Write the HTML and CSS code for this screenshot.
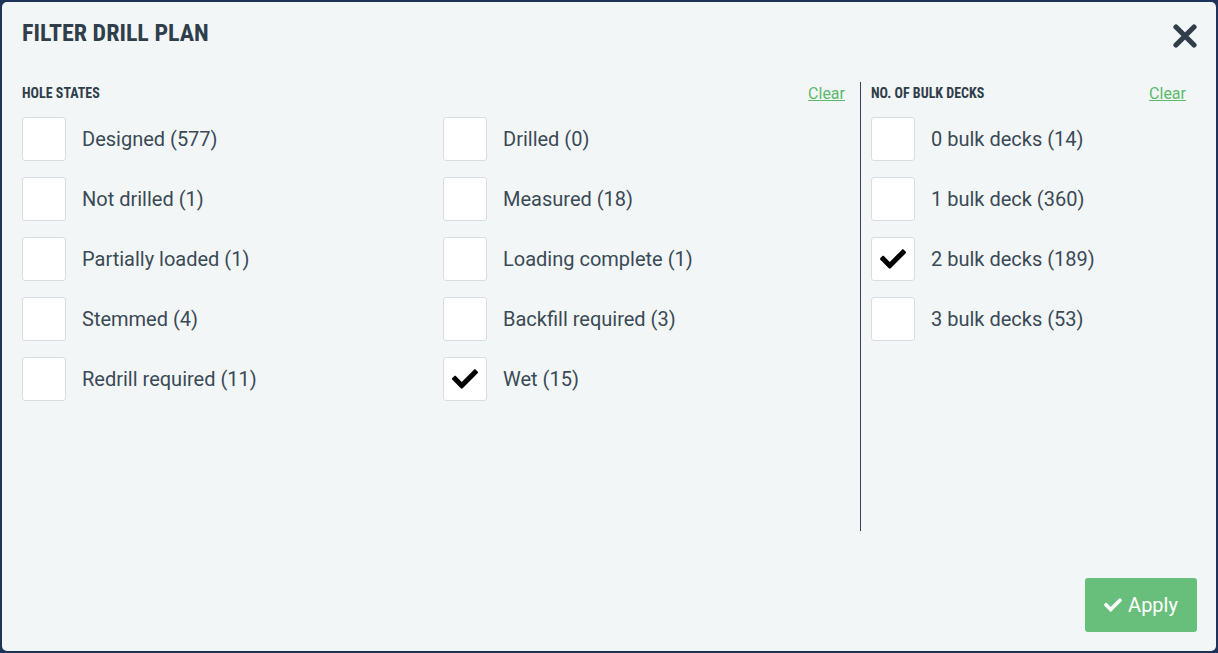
FILE: index.html
```html
<!DOCTYPE html>
<html lang="en">
<head>
    <meta charset="UTF-8">
    <meta name="viewport" content="width=device-width, initial-scale=1.0">
    <title>Filter Drill Plan</title>
    <link rel="stylesheet" href="styles.css">
</head>
<body>
    <div class="modal">
        <div class="modal-header">
            <h1>Filter drill plan</h1>
            <button class="close-btn" aria-label="Close">
                <svg width="24" height="24" viewBox="0 0 24 24">
                    <path d="M3 3 L21 21 M21 3 L3 21" stroke="#2f3e4a" stroke-width="5.2" stroke-linecap="round"/>
                </svg>
            </button>
        </div>

        <div class="modal-body">
            <div class="filter-section hole-states">
                <div class="section-header">
                    <h2>Hole states</h2>
                    <a href="#" class="clear-link">Clear</a>
                </div>
                <div class="option-grid two-cols">
                    <label class="option"><span class="box"></span>Designed (577)</label>
                    <label class="option"><span class="box"></span>Drilled (0)</label>
                    <label class="option"><span class="box"></span>Not drilled (1)</label>
                    <label class="option"><span class="box"></span>Measured (18)</label>
                    <label class="option"><span class="box"></span>Partially loaded (1)</label>
                    <label class="option"><span class="box"></span>Loading complete (1)</label>
                    <label class="option"><span class="box"></span>Stemmed (4)</label>
                    <label class="option"><span class="box"></span>Backfill required (3)</label>
                    <label class="option"><span class="box"></span>Redrill required (11)</label>
                    <label class="option"><span class="box checked"><svg class="tick" viewBox="0 0 512 512"><path d="M173.898 439.404l-166.4-166.4c-9.997-9.997-9.997-26.206 0-36.204l36.203-36.204c9.997-9.998 26.207-9.998 36.204 0L192 312.69 432.095 72.596c9.997-9.997 26.207-9.997 36.204 0l36.203 36.204c9.997 9.997 9.997 26.206 0 36.204l-294.4 294.401c-9.998 9.997-26.207 9.997-36.204-.001z"/></svg></span>Wet (15)</label>
                </div>
            </div>

            <div class="filter-section bulk-decks">
                <div class="section-header">
                    <h2>No. of bulk decks</h2>
                    <a href="#" class="clear-link">Clear</a>
                </div>
                <div class="option-grid">
                    <label class="option"><span class="box"></span>0 bulk decks (14)</label>
                    <label class="option"><span class="box"></span>1 bulk deck (360)</label>
                    <label class="option"><span class="box checked"><svg class="tick" viewBox="0 0 512 512"><path d="M173.898 439.404l-166.4-166.4c-9.997-9.997-9.997-26.206 0-36.204l36.203-36.204c9.997-9.998 26.207-9.998 36.204 0L192 312.69 432.095 72.596c9.997-9.997 26.207-9.997 36.204 0l36.203 36.204c9.997 9.997 9.997 26.206 0 36.204l-294.4 294.401c-9.998 9.997-26.207 9.997-36.204-.001z"/></svg></span>2 bulk decks (189)</label>
                    <label class="option"><span class="box"></span>3 bulk decks (53)</label>
                </div>
            </div>
        </div>

        <div class="modal-footer">
            <button class="apply-btn">
                <svg class="apply-icon" viewBox="0 0 512 512"><path d="M173.898 439.404l-166.4-166.4c-9.997-9.997-9.997-26.206 0-36.204l36.203-36.204c9.997-9.998 26.207-9.998 36.204 0L192 312.69 432.095 72.596c9.997-9.997 26.207-9.997 36.204 0l36.203 36.204c9.997 9.997 9.997 26.206 0 36.204l-294.4 294.401c-9.998 9.997-26.207 9.997-36.204-.001z"/></svg>
                Apply
            </button>
        </div>
    </div>
</body>
</html>
```

FILE: styles.css
```css
* {
    box-sizing: border-box;
}

body {
    margin: 0;
    padding: 2px;
    height: 653px;
    background-color: #1d3358;
    font-family: Roboto, "Liberation Sans", sans-serif;
    color: #3a4a56;
    overflow: hidden;
}

.modal {
    width: 1214px;
    height: 649px;
    background-color: #f3f6f7;
    border-radius: 5px;
    padding: 0 19px 0 20px;
}

.modal-header {
    display: flex;
    justify-content: space-between;
    align-items: flex-start;
    height: 80px;
    padding-top: 17px;
}

.modal-header h1 {
    margin: 0;
    font-size: 24px;
    line-height: 28px;
    font-weight: 700;
    font-stretch: condensed;
    text-transform: uppercase;
    color: #2f3e4a;
}

.close-btn {
    margin-top: 5px;
    padding: 0;
    border: none;
    background: none;
    width: 24px;
    height: 24px;
    cursor: pointer;
}

.close-btn svg {
    display: block;
}

.modal-body {
    display: flex;
    height: 449px;
}

.filter-section {
    height: 100%;
}

.hole-states {
    width: 838px;
    padding-right: 15px;
}

.bulk-decks {
    flex: 1;
    border-left: 1px solid #2f4558;
    padding: 0 11px 0 10px;
}

.section-header {
    display: flex;
    justify-content: space-between;
    align-items: center;
    height: 22px;
    margin-bottom: 13px;
}

.section-header h2 {
    margin: 0;
    font-size: 14px;
    font-weight: 700;
    font-stretch: condensed;
    text-transform: uppercase;
    color: #2f3e4a;
}

.clear-link {
    font-size: 16px;
    color: #5cba6d;
    text-decoration: underline;
    margin-top: 1px;
}

.option-grid {
    display: grid;
    grid-template-columns: 1fr;
    row-gap: 16px;
}

.option-grid.two-cols {
    grid-template-columns: 421px 1fr;
}

.option {
    display: flex;
    align-items: center;
    gap: 16px;
    font-size: 20px;
    color: #3a4a56;
    height: 44px;
    cursor: pointer;
}

.box {
    width: 44px;
    height: 44px;
    flex-shrink: 0;
    background-color: #ffffff;
    border: 1px solid #d6dee3;
    border-radius: 3px;
    display: flex;
    align-items: center;
    justify-content: center;
}

.tick {
    width: 26px;
    height: 26px;
    fill: #000000;
}

.modal-footer {
    display: flex;
    justify-content: flex-end;
    padding-top: 47px;
}

.apply-btn {
    display: flex;
    align-items: center;
    gap: 6px;
    height: 54px;
    width: 112px;
    justify-content: center;
    border: none;
    border-radius: 3px;
    background-color: #68bf7b;
    color: #ffffff;
    font-family: Roboto, "Liberation Sans", sans-serif;
    font-size: 20px;
    cursor: pointer;
}

.apply-icon {
    width: 18px;
    height: 18px;
    fill: #ffffff;
}
```
